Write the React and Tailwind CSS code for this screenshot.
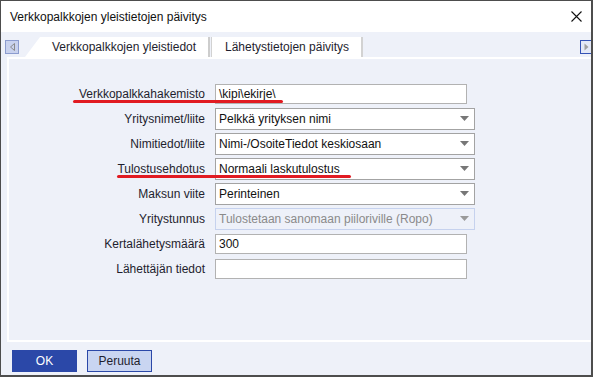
const rows = [
  { label: 'Verkkopalkkahakemisto', kind: 'text', value: '\\kipi\\ekirje\\', mark: { left: 64, width: 210 } },
  { label: 'Yritysnimet/liite', kind: 'select', value: 'Pelkkä yrityksen nimi' },
  { label: 'Nimitiedot/liite', kind: 'select', value: 'Nimi-/OsoiteTiedot keskiosaan' },
  { label: 'Tulostusehdotus', kind: 'select', value: 'Normaali laskutulostus', mark: { left: 108, width: 234 } },
  { label: 'Maksun viite', kind: 'select', value: 'Perinteinen' },
  { label: 'Yritystunnus', kind: 'select', value: 'Tulostetaan sanomaan piiloriville (Ropo)', disabled: true },
  { label: 'Kertalähetysmäärä', kind: 'text', value: '300' },
  { label: 'Lähettäjän tiedot', kind: 'text', value: '' },
];

const Arrow = ({ light }) => (
  <svg width="9" height="5" viewBox="0 0 9 5" className="shrink-0">
    <polygon points="0,0 9,0 4.5,5" fill={light ? '#9a9a9a' : '#777777'} />
  </svg>
);

const Field = ({ row }) => {
  if (row.kind === 'text') {
    return (
      <div className="w-[252px] h-[20px] bg-white border border-[#b2b2b2] flex items-center pl-[3px] text-[#111]">
        {row.value}
      </div>
    );
  }
  return (
    <div
      className={
        row.disabled
          ? 'w-[260px] h-[22px] bg-[#eef1f9] border border-[#c6d2ee] flex items-center justify-between pl-[3px] pr-[5px] text-[#8a8a8a]'
          : 'w-[260px] h-[22px] bg-white border border-[#a3a3a3] flex items-center justify-between pl-[3px] pr-[5px] text-[#111]'
      }
    >
      <span>{row.value}</span>
      <Arrow light={row.disabled} />
    </div>
  );
};

const App = () => {
  return (
    <div className="w-[593px] h-[377px] overflow-hidden bg-[#eef1f9] border-l border-t border-r-2 border-b-2 border-[#4d4d4d] flex flex-col font-['Liberation_Sans',Arial,sans-serif] text-[12px] text-[#1e1e2e]">
      {/* title bar */}
      <div className="h-[31px] shrink-0 bg-white flex items-center justify-between pl-[9px] pr-[9px]">
        <span className="text-[#111]">Verkkopalkkojen yleistietojen päivitys</span>
        <svg width="11" height="11" viewBox="0 0 11 11">
          <path d="M0.5 0.5 L10.5 10.5 M10.5 0.5 L0.5 10.5" stroke="#111" strokeWidth="1.1" />
        </svg>
      </div>

      {/* tabs */}
      <div className="h-[25px] shrink-0 flex items-end">
        <div className="self-start mt-[8px] ml-[4px] w-[14px] h-[14px] bg-[#c9d2ee] border border-[#8c9ccf] flex items-center justify-center">
          <svg width="5" height="8" viewBox="0 0 5 8">
            <polygon points="4.5,0.5 4.5,7.5 0.5,4" fill="none" stroke="#8a8a8a" strokeWidth="1" />
          </svg>
        </div>
        <div className="ml-[6px] w-[185px] h-[20px] bg-white border-r-2 border-[#cdcdcd] [clip-path:polygon(15px_0,100%_0,100%_100%,0_100%)] flex items-center pl-[27px] text-[#1e1e2e]">
          Verkkopalkkojen yleistiedot
        </div>
        <div className="ml-[1px] w-[152px] h-[20px] bg-white border-l border-r-2 border-[#d2d2d2] flex items-center pl-[13px] text-[#1e1e2e]">
          Lähetystietojen päivitys
        </div>
        <div className="self-start mt-[8px] ml-auto w-[11px] h-[14px] bg-[#e4e9f7] border-l border-t border-b border-[#3553b5] flex items-center justify-center">
          <svg width="5" height="8" viewBox="0 0 5 8">
            <polygon points="0.5,0.5 0.5,7.5 4.5,4" fill="#a0a0a0" />
          </svg>
        </div>
      </div>

      {/* panel */}
      <div className="ml-[6px] h-[285px] shrink-0 border-l-2 border-t-2 border-b-2 border-white bg-[#eef1f9] pt-[22px]">
        {rows.map((row) => (
          <div key={row.label} className="relative h-[25px] flex items-center">
            <div className="w-[196px] text-right">{row.label}</div>
            <div className="ml-[10px]">
              <Field row={row} />
            </div>
            {row.mark && (
              <span
                className="absolute top-[19px] h-[3px] rounded-full bg-[#e11b22]"
                style={{ left: row.mark.left, width: row.mark.width }}
              />
            )}
          </div>
        ))}
      </div>

      {/* buttons */}
      <div className="flex gap-[10px] pl-[11px] pt-[8px]">
        <button className="w-[65px] h-[22px] bg-[#2b48a8] text-white text-[12px]">OK</button>
        <button className="w-[65px] h-[22px] bg-[#c9d5f1] border border-[#2b48a8] text-[#1e1e2e] text-[12px]">Peruuta</button>
      </div>
    </div>
  );
};

export default App;
